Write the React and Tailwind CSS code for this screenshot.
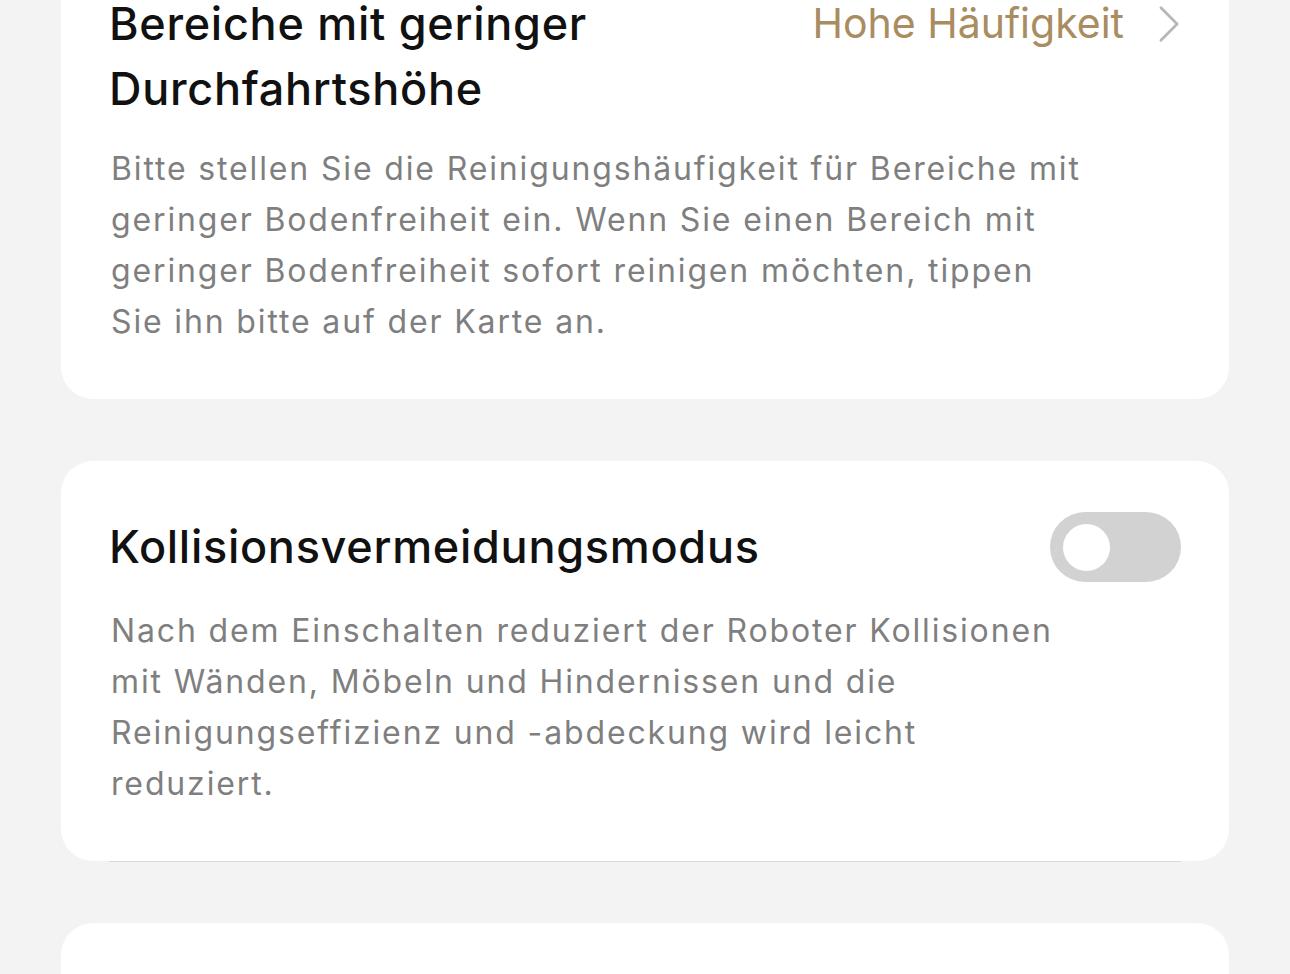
import { useState } from "react";

function Toggle({ on, onChange }) {
  return (
    <button
      onClick={() => onChange(!on)}
      className={`relative w-[131px] h-[70px] rounded-full shrink-0 transition-colors ${
        on ? "bg-[#a98c5f]" : "bg-[#d2d2d2]"
      }`}
    >
      <span
        className={`absolute top-[11.5px] w-[47px] h-[47px] rounded-full bg-white transition-all ${
          on ? "left-[71px]" : "left-[13px]"
        }`}
      />
    </button>
  );
}

function Description({ lines }) {
  return (
    <div className="pl-[2px] text-[32px] leading-[51px] tracking-[0.058em] text-[#7f7f7f]">
      {lines.map((line) => (
        <div key={line} className="whitespace-nowrap">
          {line}
        </div>
      ))}
    </div>
  );
}

export default function App() {
  const [avoid, setAvoid] = useState(false);

  return (
    <div
      className="min-h-screen bg-[#f3f3f3] px-[61px] overflow-hidden"
      style={{ fontFamily: "Inter, 'Noto Sans', sans-serif" }}
    >
      {/* Low clearance areas */}
      <div className="-mt-[60px] bg-white rounded-[32px] pt-[51px] pb-[52px] px-[48px]">
        <div className="flex items-start justify-between">
          <h2 className="text-[45px] leading-[65px] font-medium tracking-[0.016em] text-[#111] max-w-[560px]">
            Bereiche mit geringer Durchfahrtshöhe
          </h2>
          <div className="flex items-center h-[65px]">
            <span className="text-[41px] text-[#a98c5f]">Hohe Häufigkeit</span>
            <svg
              viewBox="0 0 24 40"
              className="w-[23px] h-[38px] ml-[34px]"
              fill="none"
              stroke="#b8b8b8"
              strokeWidth="3"
              strokeLinecap="round"
              strokeLinejoin="round"
            >
              <path d="M3 3 L20 20 L3 37" />
            </svg>
          </div>
        </div>
        <div className="mt-[22px]">
          <Description
            lines={[
              "Bitte stellen Sie die Reinigungshäufigkeit für Bereiche mit",
              "geringer Bodenfreiheit ein. Wenn Sie einen Bereich mit",
              "geringer Bodenfreiheit sofort reinigen möchten, tippen",
              "Sie ihn bitte auf der Karte an.",
            ]}
          />
        </div>
      </div>

      {/* Collision avoidance */}
      <div className="mt-[62px] bg-white rounded-[32px] pt-[51px] pb-[52px] px-[48px]">
        <div className="flex items-center justify-between">
          <h2 className="text-[45px] leading-[52px] font-medium tracking-[0.016em] text-[#111]">
            Kollisionsvermeidungsmodus
          </h2>
          <Toggle on={avoid} onChange={setAvoid} />
        </div>
        <div className="mt-[23px]">
          <Description
            lines={[
              "Nach dem Einschalten reduziert der Roboter Kollisionen",
              "mit Wänden, Möbeln und Hindernissen und die",
              "Reinigungseffizienz und -abdeckung wird leicht",
              "reduziert.",
            ]}
          />
        </div>
      </div>
      <div className="mx-[48px] h-px bg-[#dadada]" />

      {/* Next card */}
      <div className="mt-[61px] bg-white rounded-t-[32px] h-[120px]" />
    </div>
  );
}
